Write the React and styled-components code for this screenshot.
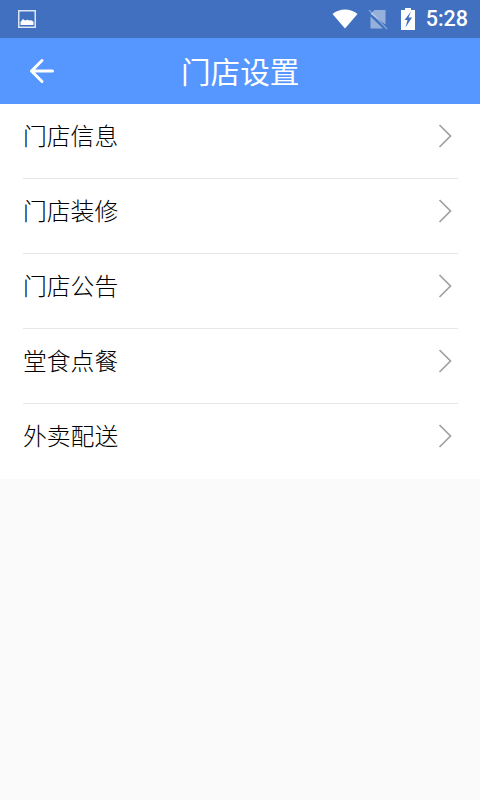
import React from "react";
import styled, { createGlobalStyle } from "styled-components";

const GlobalStyle = createGlobalStyle`
  html, body {
    margin: 0;
    padding: 0;
    background: #fafafa;
  }
  * {
    box-sizing: border-box;
  }
`;

const Page = styled.div`
  width: 480px;
  height: 800px;
  background: #fafafa;
  font-family: "Noto Sans CJK SC", "Roboto", sans-serif;
  overflow: hidden;
`;

const StatusBar = styled.div`
  height: 38px;
  background: #4070bf;
  display: flex;
  align-items: center;
  justify-content: space-between;
  padding: 0 12px 0 18px;
`;

const StatusIcons = styled.div`
  display: flex;
  align-items: center;
`;

const StatusIcon = styled.svg`
  display: block;
  margin-right: ${(p) => p.$gap || 0}px;
`;

const Clock = styled.span`
  font-family: "Roboto", sans-serif;
  font-size: 21.5px;
  font-weight: 500;
  color: #fff;
  margin-left: 11px;
  line-height: 38px;
`;

const Header = styled.header`
  height: 66px;
  background: #5596ff;
  display: flex;
  align-items: center;
  padding-left: 29px;
`;

const BackIcon = styled.svg`
  width: 26px;
  height: 26px;
  display: block;
`;

const Title = styled.h1`
  margin: 0 0 0 126px;
  font-size: 29.6px;
  font-weight: 400;
  color: #fff;
  line-height: 66px;
`;

const Menu = styled.ul`
  margin: 0;
  padding: 0;
  list-style: none;
  background: #fff;
`;

const MenuItem = styled.li`
  height: 75px;
  margin: 0 22px 0 23px;
  padding-bottom: ${(p) => (p.$last ? "12px" : "11px")};
  display: flex;
  align-items: center;
  justify-content: space-between;
  border-bottom: ${(p) => (p.$last ? "none" : "1px solid #e6e6e6")};
`;

const MenuLabel = styled.span`
  font-size: 23.8px;
  font-weight: 300;
  color: #000;
  line-height: 40px;
  margin-bottom: 2px;
`;

const Chevron = styled.svg`
  width: 15px;
  height: 24px;
  margin-right: 5px;
  display: block;
`;

const items = ["门店信息", "门店装修", "门店公告", "堂食点餐", "外卖配送"];

const App = () => {
  return (
    <Page>
      <GlobalStyle />
      <StatusBar>
        <StatusIcon width="18" height="18" viewBox="0 0 18 18">
          <rect x="0.75" y="0.75" width="16.5" height="16.5" fill="none" stroke="#dce6f5" strokeWidth="1.5" />
          <path d="M2.5 15v-3L5 9l2 1.6 2.5-.8 2 .8 2-.4 2 1.6V15z" fill="#fff" />
        </StatusIcon>
        <StatusIcons>
          <StatusIcon $gap={10} width="26" height="20" viewBox="0 0 26 20">
            <path d="M0.5 5C4 2 8.3 0.5 13 0.5S22 2 25.5 5L13 19.5z" fill="#fff" />
          </StatusIcon>
          <StatusIcon $gap={13} width="20" height="21" viewBox="0 0 20 21">
            <path d="M2.5 5l4-4h11v14.5zM2.5 7.5L15 19.5H2.5z" fill="#fff" opacity="0.45" />
            <path d="M1 1l18 19" stroke="#fff" strokeWidth="1.4" opacity="0.35" />
          </StatusIcon>
          <StatusIcon width="14" height="22" viewBox="0 0 14 22">
            <path
              fillRule="evenodd"
              d="M4 0h6v2h4v20H0V2h4zM10 3.5L3.5 12h3L4.5 19.5 11 9.5H7.5z"
              fill="#fff"
            />
          </StatusIcon>
          <Clock>5:28</Clock>
        </StatusIcons>
      </StatusBar>
      <Header>
        <BackIcon viewBox="0 0 26 26" fill="none" stroke="#fff" strokeWidth="3" strokeLinecap="round" strokeLinejoin="round">
          <path d="M2.5 13h21M13 2.5L2.5 13 13 23.5" />
        </BackIcon>
        <Title>门店设置</Title>
      </Header>
      <Menu>
        {items.map((label, i) => (
          <MenuItem key={label} $last={i === items.length - 1}>
            <MenuLabel>{label}</MenuLabel>
            <Chevron viewBox="0 0 15 24" fill="none" stroke="#a0a0a0" strokeWidth="1.7">
              <path d="M1.5 1L12.5 12 1.5 23" />
            </Chevron>
          </MenuItem>
        ))}
      </Menu>
    </Page>
  );
};

export default App;
